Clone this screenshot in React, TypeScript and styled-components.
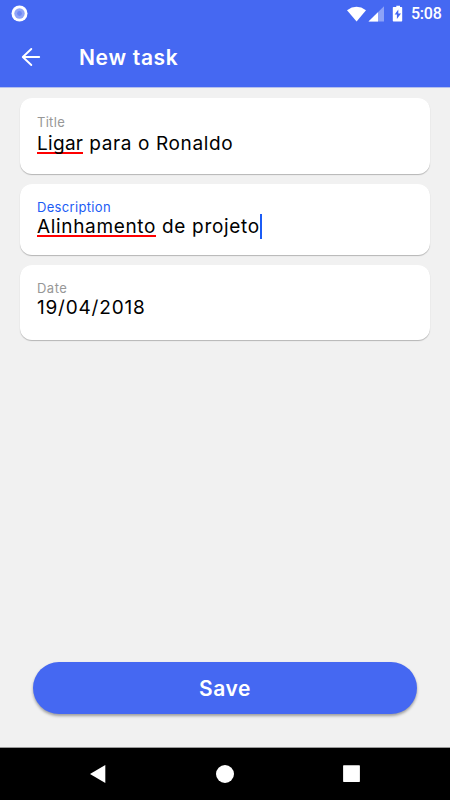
import React from "react";
import styled, { createGlobalStyle } from "styled-components";

const blue = "#4568f2";

const GlobalStyle = createGlobalStyle`
  * { box-sizing: border-box; }
  html, body { margin: 0; padding: 0; }
  body { font-family: Inter, "Liberation Sans", sans-serif; background: #f1f1f1; }
`;

const Screen = styled.div`
  width: 450px;
  height: 800px;
  display: flex;
  flex-direction: column;
  background: #f1f1f1;
  overflow: hidden;
`;

const Header = styled.header`
  height: 88px;
  flex: none;
  background: ${blue};
  border-bottom: 1px solid #b5c0ee;
  color: #fff;
`;

const StatusBar = styled.div`
  height: 27px;
  display: flex;
  align-items: center;
  padding: 0 9px 0 11px;
`;

const StatusIcons = styled.div`
  margin-left: auto;
  display: flex;
  align-items: center;
`;

const Clock = styled.span`
  font: 500 16px/20px Roboto, sans-serif;
  width: 30px;
  margin-left: 8px;
  white-space: nowrap;
  letter-spacing: -0.25px;
`;

const Toolbar = styled.div`
  height: 60px;
  display: flex;
  align-items: center;
  padding-left: 21px;
`;

const BackButton = styled.button`
  display: flex;
  width: 20px;
  padding: 0;
  border: 0;
  background: none;
`;

const PageTitle = styled.h1`
  margin: 1px 0 0 38px;
  font-size: 21px;
  line-height: 26px;
  font-weight: 600;
  letter-spacing: 0.68px;
`;

const Form = styled.form`
  flex: 1;
  display: flex;
  flex-direction: column;
  padding: 10.4px 19.6px 33px;
`;

const Card = styled.div<{ $height: number }>`
  height: ${(p) => p.$height}px;
  flex: none;
  margin-bottom: 9.4px;
  padding: 15.6px 17.4px 0;
  border-radius: 12px;
  background: #fff;
  box-shadow: 0 1px 1px rgba(0, 0, 0, 0.25);
`;

const Label = styled.div<{ $active?: boolean; $spacing: number }>`
  font-size: 13px;
  line-height: 16px;
  letter-spacing: ${(p) => p.$spacing}px;
  color: ${(p) => (p.$active ? "#1c5cf5" : "#979797")};
`;

const Value = styled.div<{ $gap: number; $spacing: number }>`
  display: flex;
  margin-top: ${(p) => p.$gap}px;
  font-size: 19px;
  line-height: 20px;
  letter-spacing: ${(p) => p.$spacing}px;
  white-space: pre;
  color: #000;
`;

const Misspelled = styled.span<{ $spacing: number }>`
  height: 18px;
  letter-spacing: ${(p) => p.$spacing}px;
  box-shadow: 0 2px 0 #f00;
`;

const Caret = styled.span`
  width: 2px;
  height: 25px;
  margin-top: -3px;
  background: #1c5cf5;
`;

const SaveButton = styled.button`
  height: 52px;
  margin: auto 13.4px 0;
  padding: 2px 0 0;
  border: 0;
  border-radius: 26px;
  background: ${blue};
  box-shadow: 0 2px 3px rgba(0, 0, 0, 0.35);
  color: #fff;
  font: 600 21px/26px Inter, sans-serif;
  letter-spacing: 0.6px;
`;

const NavBar = styled.nav`
  height: 53px;
  flex: none;
  display: flex;
  justify-content: center;
  align-items: center;
  gap: 107px;
  background: #000;
  border-top: 1px solid #999;
`;

export default function App() {
  return (
    <>
      <GlobalStyle />
      <Screen>
        <Header>
          <StatusBar>
            <svg width="17" height="17" viewBox="0 0 17 17">
              <circle cx="8.5" cy="8.5" r="8" fill="#fff" />
              <circle cx="8.5" cy="8.5" r="5.2" fill="#8fa4f7" />
              <circle cx="8.5" cy="8.5" r="2.4" fill="#6d87f5" />
            </svg>
            <StatusIcons>
              <svg width="56" height="18" viewBox="0 0 56 18">
                <path d="M0 5.3Q9.5-1.6 19 5.3L9.6 16.6Z" fill="#fff" />
                <path d="M37 1.3V16.5H21.5Z" fill="#8da2f7" />
                <path d="M31 7.2V16.5H21.5Z" fill="#fff" />
                <path d="M47.7 2h1.6V.7h3.7V2h1.5q.7 0 .7.7v13.1q0 .7-.7.7h-8q-.7 0-.7-.7V2.7q0-.7.7-.7Z" fill="#fff" />
                <path d="M51.3 4.4 47.7 9.6h2.2v4.4L54 8.5H51.3Z" fill={blue} />
              </svg>
              <Clock>5:08</Clock>
            </StatusIcons>
          </StatusBar>
          <Toolbar>
            <BackButton aria-label="Back">
              <svg width="20" height="20" viewBox="0 0 20 20" fill="none" stroke="#fff" strokeWidth="1.9" strokeLinecap="round" strokeLinejoin="round">
                <path d="M18.2 10H2M10.3 2 1.8 10l8.5 8" />
              </svg>
            </BackButton>
            <PageTitle>New task</PageTitle>
          </Toolbar>
        </Header>
        <Form>
          <Card $height={75.8}>
            <Label $spacing={0.3}>Title</Label>
            <Value $gap={4} $spacing={0.62}>
              <Misspelled $spacing={0.3}>Ligar</Misspelled> para o Ronaldo
            </Value>
          </Card>
          <Card $height={71.6}>
            <Label $active $spacing={0.33}>Description</Label>
            <Value $gap={2} $spacing={0.66}>
              <Misspelled $spacing={0.66}>Alinhamento</Misspelled> de projeto
              <Caret />
            </Value>
          </Card>
          <Card $height={75.4}>
            <Label $spacing={0.5}>Date</Label>
            <Value $gap={2} $spacing={0.8}>19/04/2018</Value>
          </Card>
          <SaveButton type="button">Save</SaveButton>
        </Form>
        <NavBar>
          <svg width="20" height="20" viewBox="0 0 20 20">
            <path d="M17.3 1v18L2 10Z" fill="#fff" />
          </svg>
          <svg width="20" height="20" viewBox="0 0 20 20">
            <circle cx="10" cy="10" r="9" fill="#fff" />
          </svg>
          <svg width="20" height="20" viewBox="0 0 20 20">
            <rect x="1.1" y="1.3" width="16.8" height="16.6" rx=".6" fill="#fff" />
          </svg>
        </NavBar>
      </Screen>
    </>
  );
}
